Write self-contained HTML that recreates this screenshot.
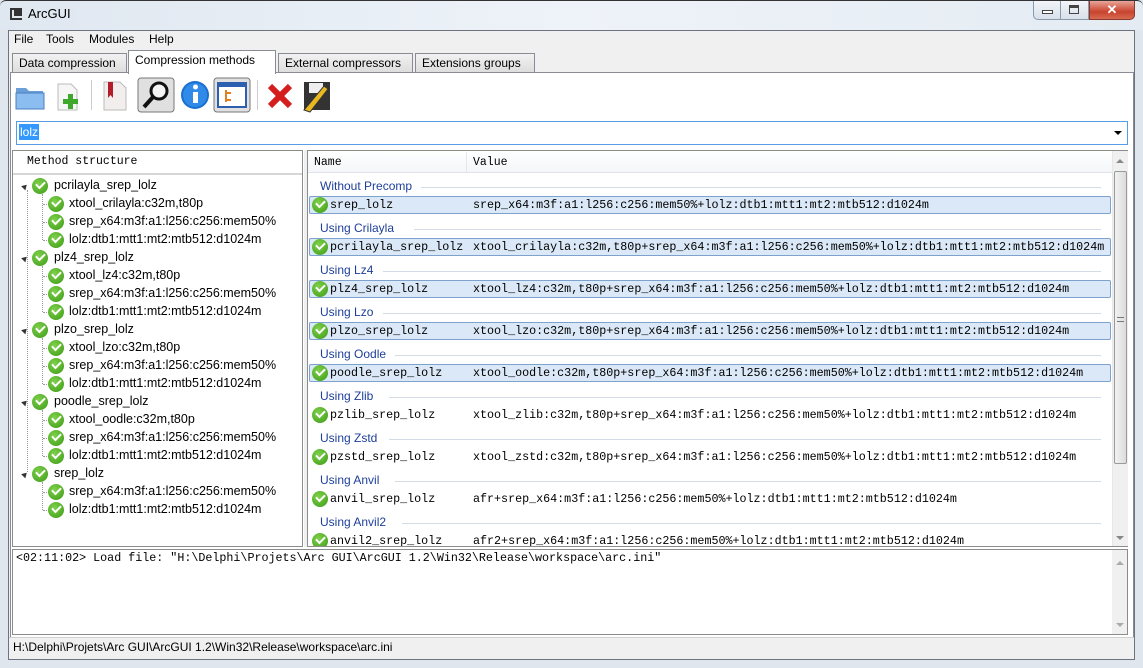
<!DOCTYPE html>
<html><head><meta charset="utf-8"><style>
*{margin:0;padding:0;box-sizing:border-box}
body{width:1143px;height:668px;overflow:hidden;background:#dfe6ee;font-family:"Liberation Sans",sans-serif;font-size:12px;color:#000;position:relative}
.a{position:absolute}
.mono{font-family:"Liberation Mono","DejaVu Sans Mono",monospace;font-size:11.7px}
.chk{position:absolute;width:16px;height:16px;border-radius:50%;background:radial-gradient(circle at 40% 35%,#7fd14a,#3b9a16);}
.chk:after{content:"";position:absolute;left:4px;top:3px;width:7px;height:4px;border-left:2px solid #fff;border-bottom:2px solid #fff;transform:rotate(-45deg)}
.grp{position:absolute;left:320px;color:#1e3f9a;font-size:12px}
.gl{position:absolute;height:1px;background:#d3dbe6}
.row{position:absolute;left:309px;width:802px;height:18px}
.sel{background:#dbe8f7;border:1px solid #7da2ce;border-radius:2px}
.tab{position:absolute;top:53px;height:20px;background:linear-gradient(#f2f2f2,#dcdcdc);border:1px solid #898c95;border-bottom:none;padding:2px 6px;font-size:12px}
</style></head><body>
<div class="a" style="left:0;top:0;width:1143px;height:30px;background:linear-gradient(90deg,#dfe7f0,#eef3f9 50%,#e4ebf2);border-top:1px solid #333;border-radius:6px 6px 0 0"></div>
<div class="a" style="left:10px;top:8px;width:12px;height:12px;border:2px solid #333;border-right:none;"></div>
<div class="a" style="left:14px;top:10px;width:8px;height:6px;background:#333"></div>
<div class="a" style="left:28px;top:6px;font-size:13px">ArcGUI</div>
<div class="a" style="left:1033px;top:1px;width:56px;height:19px;border:1px solid #8a99ad;border-top:none;border-radius:0 0 0 5px;background:linear-gradient(#f2f5f9,#d8e0ea)"></div>
<div class="a" style="left:1060px;top:1px;width:1px;height:19px;background:#8a99ad"></div>
<div class="a" style="left:1042px;top:10px;width:11px;height:4px;border:1px solid #444;background:#fff"></div>
<div class="a" style="left:1069px;top:5px;width:10px;height:9px;border:1px solid #444;border-top:3px solid #444"></div>
<div class="a" style="left:1089px;top:1px;width:46px;height:19px;border:1px solid #8a3a30;border-top:none;border-radius:0 0 5px 0;background:linear-gradient(#e8a598,#c8442e 60%,#d86a50);color:#fff;font-weight:bold;text-align:center;font-size:13px;line-height:17px">✕</div>
<div class="a" style="left:8px;top:30px;width:1127px;height:630px;background:#f0f0f0;border:1px solid #6d7480"></div>
<div class="a" style="left:14px;top:32px">File</div>
<div class="a" style="left:46px;top:32px">Tools</div>
<div class="a" style="left:89px;top:32px">Modules</div>
<div class="a" style="left:149px;top:32px">Help</div>
<div class="tab" style="left:12px;width:115px">Data compression</div>
<div class="tab" style="left:278px;width:135px">External compressors</div>
<div class="tab" style="left:415px;width:120px">Extensions groups</div>
<div class="tab" style="left:128px;top:50px;width:148px;height:24px;background:#fff;z-index:2">Compression methods</div>
<div class="a" style="left:10px;top:72px;width:1124px;height:578px;background:#fff;border:1px solid #898c95"></div>
<svg class="a" style="left:12px;top:76px" width="330" height="38">
<path d="M4 12h10l3 3h14v18H4z" fill="#6a9fd8"/><rect x="4" y="17" width="28" height="16" fill="#8cbdf0" stroke="#4a7fbf"/>
<path d="M46 8h13l6 6v20H46z" fill="#f6f6f6" stroke="#bbb"/><path d="M53 28h5v-5h5v5h5v5h-5v5h-5v-5h-5z" fill="#3ea82c" transform="translate(-2,-5)"/>
<rect x="79" y="4" width="1" height="30" fill="#ccc"/>
<path d="M92 6h16l6 6v22H92z" fill="#f2eeee" stroke="#bbb"/><path d="M96 6h5v16l-2.5-3-2.5 3z" fill="#b41e2a"/>
<rect x="126" y="2" width="36" height="34" rx="3" fill="#e0e0e0" stroke="#777"/><circle cx="147" cy="15" r="8" fill="#f4f4f4" stroke="#111" stroke-width="3"/><path d="M141 21l-9 10" stroke="#111" stroke-width="4"/>
<circle cx="183" cy="19" r="14" fill="#1a6fd0"/><circle cx="183" cy="19" r="12" fill="#2f8ae8"/><rect x="181" y="16" width="5" height="11" fill="#fff"/><circle cx="183.5" cy="11" r="2.5" fill="#fff"/>
<rect x="202" y="2" width="36" height="34" rx="3" fill="#e0e0e0" stroke="#777"/><rect x="206" y="7" width="28" height="24" fill="#fff" stroke="#2d5fb0" stroke-width="2"/><rect x="206" y="7" width="28" height="4" fill="#2d5fb0"/><path d="M214 14v12M214 17h5M214 24h5" stroke="#e08020" stroke-width="2"/>
<rect x="245" y="4" width="1" height="30" fill="#ccc"/>
<path d="M258 10l20 20M278 10l-20 20" stroke="#d51f1f" stroke-width="6"/>
<rect x="292" y="6" width="26" height="28" fill="#333"/><rect x="297" y="7" width="14" height="10" fill="#eee"/><path d="M292 34l20-24 4 3-18 23z" fill="#e8b820" stroke="#333"/>
</svg>
<div class="a" style="left:16px;top:121px;width:1112px;height:24px;background:#fff;border:1px solid #569de5"></div>
<div class="a" style="left:19px;top:124px;height:16px;background:#3399ff;color:#fff;padding:0 1px;line-height:16px">lolz</div>
<div class="a" style="left:1114px;top:131px;border-left:4px solid transparent;border-right:4px solid transparent;border-top:4px solid #000"></div>
<div class="a" style="left:12px;top:150px;width:291px;height:397px;background:#fff;border:1px solid #8c8c8c"></div>
<div class="a" style="left:13px;top:151px;width:289px;height:24px;background:#fff;border-bottom:2px solid #d6d6d6"></div>
<div class="a mono" style="left:27px;top:155px;font-size:11.5px">Method structure</div>
<div class="a" style="left:304px;top:150px;width:3px;height:397px;background:#f0f0f0"></div>
<div id="tree"></div>
<div class="a" style="left:307px;top:150px;width:821px;height:397px;background:#fff;border:1px solid #8c8c8c"></div>
<div class="a" style="left:308px;top:151px;width:804px;height:22px;background:linear-gradient(#fff,#f4f6f9);border-bottom:1px solid #e0e4ea"></div>
<div class="a" style="left:466px;top:152px;width:1px;height:20px;background:#e3e6ea"></div>
<div class="a mono" style="left:314px;top:156px;font-size:11.5px">Name</div>
<div class="a mono" style="left:473px;top:156px;font-size:11.5px">Value</div>
<div class="a" style="left:1112px;top:151px;width:16px;height:395px;background:#f0f0f0;border-left:1px solid #e6e6e6"></div>
<div class="a" style="left:1114px;top:171px;width:13px;height:293px;background:linear-gradient(90deg,#f2f2f2,#dcdcdc);border:1px solid #9a9a9a;border-radius:2px"></div>
<div class="a" style="left:1117px;top:317px;width:7px;height:5px;border-top:1px solid #777;border-bottom:1px solid #777"></div>
<div class="a" style="left:1116px;top:159px;border-left:4px solid transparent;border-right:4px solid transparent;border-bottom:4px solid #888"></div>
<div class="a" style="left:1116px;top:536px;border-left:4px solid transparent;border-right:4px solid transparent;border-top:4px solid #888"></div>
<div id="list"></div>
<div class="a" style="left:12px;top:549px;width:1116px;height:86px;background:#fff;border:1px solid #8c8c8c"></div>
<div class="a mono" style="left:16px;top:551px;white-space:pre">&lt;02:11:02&gt; Load file: "H:\Delphi\Projets\Arc GUI\ArcGUI 1.2\Win32\Release\workspace\arc.ini"</div>
<div class="a" style="left:1112px;top:550px;width:15px;height:84px;background:#f0f0f0"></div>
<div class="a" style="left:1116px;top:561px;border-left:4px solid transparent;border-right:4px solid transparent;border-bottom:4px solid #aaa"></div>
<div class="a" style="left:1116px;top:623px;border-left:4px solid transparent;border-right:4px solid transparent;border-top:4px solid #aaa"></div>
<div class="a" style="left:9px;top:637px;width:1125px;height:22px;background:#f0f0f0;border-top:1px solid #d0d0d0"></div>
<div class="a" style="left:13px;top:640px">H:\Delphi\Projets\Arc GUI\ArcGUI 1.2\Win32\Release\workspace\arc.ini</div>
<script>
var t=[["pcrilayla_srep_lolz",["xtool_crilayla:c32m,t80p","srep_x64:m3f:a1:l256:c256:mem50%","lolz:dtb1:mtt1:mt2:mtb512:d1024m"]],
["plz4_srep_lolz",["xtool_lz4:c32m,t80p","srep_x64:m3f:a1:l256:c256:mem50%","lolz:dtb1:mtt1:mt2:mtb512:d1024m"]],
["plzo_srep_lolz",["xtool_lzo:c32m,t80p","srep_x64:m3f:a1:l256:c256:mem50%","lolz:dtb1:mtt1:mt2:mtb512:d1024m"]],
["poodle_srep_lolz",["xtool_oodle:c32m,t80p","srep_x64:m3f:a1:l256:c256:mem50%","lolz:dtb1:mtt1:mt2:mtb512:d1024m"]],
["srep_lolz",["srep_x64:m3f:a1:l256:c256:mem50%","lolz:dtb1:mtt1:mt2:mtb512:d1024m"]]];
var h="",y=186;
h+='<div class="a" style="left:27px;top:190px;width:0;height:282px;border-left:1px dotted #999"></div>';
t.forEach(function(p){
 var y0=y;
 h+='<div class="a" style="left:22px;top:'+(y-2)+'px;border-left:3px solid transparent;border-right:3px solid transparent;border-bottom:5px solid #333;transform:rotate(45deg)"></div>';
 h+='<div class="chk" style="left:32px;top:'+(y-8)+'px"></div><div class="a" style="left:54px;top:'+(y-8)+'px;font-size:12.5px">'+p[0]+'</div>';
 y+=18;
 p[1].forEach(function(c){
  h+='<div class="a" style="left:43px;top:'+y+'px;width:6px;border-top:1px dotted #999"></div>';
  h+='<div class="chk" style="left:48px;top:'+(y-8)+'px"></div><div class="a" style="left:69px;top:'+(y-8)+'px;font-size:12.5px">'+c+'</div>';
  y+=18;});
 h+='<div class="a" style="left:42px;top:'+(y0+8)+'px;height:'+(y-y0-26)+'px;border-left:1px dotted #999"></div>';
});
document.getElementById("tree").innerHTML=h;
var S="srep_x64:m3f:a1:l256:c256:mem50%+lolz:dtb1:mtt1:mt2:mtb512:d1024m";
var L=[["Without Precomp","srep_lolz",S,1],["Using Crilayla","pcrilayla_srep_lolz","xtool_crilayla:c32m,t80p+"+S,1],["Using Lz4","plz4_srep_lolz","xtool_lz4:c32m,t80p+"+S,1],["Using Lzo","plzo_srep_lolz","xtool_lzo:c32m,t80p+"+S,1],["Using Oodle","poodle_srep_lolz","xtool_oodle:c32m,t80p+"+S,1],["Using Zlib","pzlib_srep_lolz","xtool_zlib:c32m,t80p+"+S,0],["Using Zstd","pzstd_srep_lolz","xtool_zstd:c32m,t80p+"+S,0],["Using Anvil","anvil_srep_lolz","afr+"+S,0],["Using Anvil2","anvil2_srep_lolz","afr2+"+S,0]];
h="";
L.forEach(function(r,i){var g=179+i*42;
 h+='<div class="grp" style="top:'+g+'px">'+r[0]+'</div><div class="gl" style="left:'+(326+r[0].length*6.3)+'px;top:'+(g+8)+'px;width:'+(775-r[0].length*6.3)+'px"></div>';
 var ry=g+17;
 h+='<div class="row'+(r[3]?' sel':'')+'" style="top:'+ry+'px"></div>';
 h+='<div class="chk" style="left:312px;top:'+(ry+1)+'px"></div>';
 h+='<div class="a mono" style="left:330px;top:'+(ry+2)+'px">'+r[1]+'</div><div class="a mono" style="left:473px;top:'+(ry+2)+'px">'+r[2]+'</div>';
});
var d=document.getElementById("list");d.innerHTML=h;
d.style.cssText="position:absolute;left:0;top:0;width:1112px;height:546px;overflow:hidden;clip-path:inset(174px 0 0 0)";
</script>
</body></html>
